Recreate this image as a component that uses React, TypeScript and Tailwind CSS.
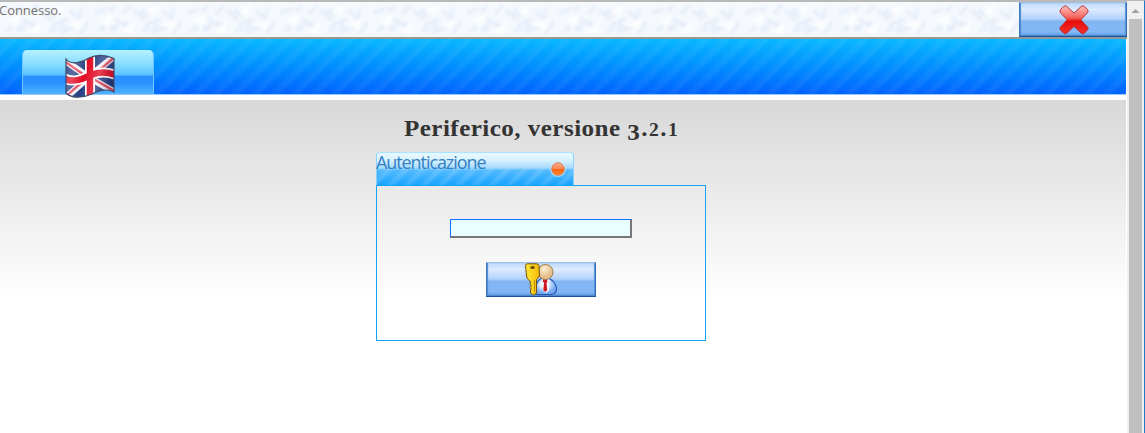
import React from "react";

function CrossIcon() {
  return (
    <svg width="32" height="32" viewBox="0 0 32 32" className="block">
      <defs>
        <linearGradient id="cross" x1="0" y1="0" x2="0" y2="1">
          <stop offset="0" stopColor="#ffc0ba" />
          <stop offset=".42" stopColor="#f4625d" />
          <stop offset=".55" stopColor="#e80d0b" />
          <stop offset="1" stopColor="#f0312c" />
        </linearGradient>
      </defs>
      <path
        d="M2.500 5.500 5.500 2.500Q7 1.200 8.800 2.500L16 9 23.200 2.500Q25 1.200 26.500 2.500L29.500 5.500Q30.800 7 29.500 8.700L22.800 15.800 29.500 23Q31 24.500 29.500 26L26.300 29.200Q25 30.500 23.300 29.200L16 22.500 8.700 29.200Q7.200 30.500 5.700 29.200L2.500 26Q1.200 24.500 2.500 23L9.200 15.800 2.500 8.800Q1.200 7 2.500 5.500Z"
        fill="url(#cross)"
        stroke="#bb3036"
        strokeWidth="1"
      />
    </svg>
  );
}

function UnionFlag() {
  const outline = "M2 5C7 12 19 8 25 4C33 0 42 1 50 4.500V38C43 34 34 37 28 40C19 44 8 45 2 39Z";
  return (
    <svg width="52" height="46" viewBox="0 0 52 46" className="block">
      <defs>
        <clipPath id="flagShape"><path d={outline} /></clipPath>
        <linearGradient id="shine" x1="0" y1="0" x2="1" y2=".25">
          <stop offset="0" stopColor="#fff" stopOpacity=".05" />
          <stop offset=".25" stopColor="#fff" stopOpacity=".25" />
          <stop offset=".48" stopColor="#fff" stopOpacity="0" />
          <stop offset=".75" stopColor="#fff" stopOpacity=".22" />
          <stop offset="1" stopColor="#001" stopOpacity=".15" />
        </linearGradient>
      </defs>
      <g clipPath="url(#flagShape)" fill="none">
        <path d="M0 0H52V46H0Z" fill="#263f82" />
        <path d="M0 6 26 24 52 39M0 45 26 22 52 1" stroke="#f4f0f8" strokeWidth="6.500" />
        <path d="M0 7 26 25M26 23 52 38M0 44 26 21M26 24 52 2" stroke="#e4475a" strokeWidth="2.400" />
        <path d="M26 0V46M0 24C9 30 20 24 27 21C36 17 44 18 52 21" stroke="#fff" strokeWidth="10" />
        <path d="M26 0V46M0 24C9 30 20 24 27 21C36 17 44 18 52 21" stroke="#e30b24" strokeWidth="6.500" />
        <path d="M0 0H52V46H0Z" fill="url(#shine)" />
      </g>
      <path d={outline} fill="none" stroke="#404c68" strokeWidth="1.200" />
    </svg>
  );
}

function KeyUserIcon() {
  return (
    <svg width="34" height="34" viewBox="0 0 34 34" className="block">
      <defs>
        <radialGradient id="head" cx=".4" cy=".3">
          <stop offset="0" stopColor="#fff0d4" />
          <stop offset="1" stopColor="#e6c08c" />
        </radialGradient>
        <linearGradient id="key">
          <stop offset="0" stopColor="#ffe735" />
          <stop offset="1" stopColor="#f4bb08" />
        </linearGradient>
        <radialGradient id="body" cx=".45" cy=".4">
          <stop offset=".3" stopColor="#f5faff" />
          <stop offset="1" stopColor="#75a9f4" />
        </radialGradient>
      </defs>
      <path d="M13 20Q15 15 21 15Q29 15 32 23Q34 31 27 31.500H14Q10 31 11 26Z" fill="url(#body)" stroke="#2457b5" strokeWidth="1.200" />
      <path d="m17 16 4 2 4-2 1 2-2 2 1 7-3 3-3-3 1-7-2-2Z" fill="#fff" />
      <path d="M19 16.500h4l.5 2-1 1.500 .8 7-2 2-2-2 .8-7-1.200-1.500Z" fill="#cb1927" />
      <circle cx="21.500" cy="9" r="7.500" fill="url(#head)" stroke="#98713d" strokeWidth=".9" />
      <path d="M1.500 2.500Q1.500 .800 3.500 .800H12.500Q14.500 .800 15 2.500L15.500 12Q15 15 12.500 16.500V30L9.500 32 6.500 30V27L7.300 26 6 24.500 7.300 23 6 21 6.500 18.500Q2.500 16 2.500 13Z" fill="url(#key)" stroke="#76540f" strokeWidth="1" />
      <path d="M10.500 17V29" stroke="#b97a00" strokeWidth=".8" />
      <ellipse cx="8.500" cy="4.500" rx="2.300" ry="1.500" fill="#6b4810" />
    </svg>
  );
}

function IceTexture() {
  return (
    <svg width="100%" height="35" className="absolute inset-0">
      <defs>
        <filter id="soften" x="0" y="0" width="100%" height="100%"><feGaussianBlur stdDeviation="1.2" /></filter>
        <pattern id="ice" width="93" height="36" patternUnits="userSpaceOnUse">
          <path d="M0 0H93V36H0Z" fill="#f5f8fd" />
          <g filter="url(#soften)">
            <path d="m2 30 9-8 2 7Zm12-23 10-5-5 10Zm14 22 4-11 7 6Zm16-17 7-7 6 11Zm14 17 4-11 8 10Zm18-18 7-7-2 13Zm-58 11 8 6-10 2Zm37-3 3 10-11 2Z" fill="#e5edf9" opacity=".75" />
            <path d="m1 11 12-4M18 29l9-9M41 8l11 10M60 31l15-6M70 9l10 9M30 12l8-9M80 32l9-12M22 17l14 8M55 22l13-5" stroke="#e3ebf8" strokeWidth="4" opacity=".6" />
            <path d="m7 19 14-8-4 13Zm20 9 15-9-4 14Zm27-20 12-6-4 12Zm15 15 15-7-4 12Z" fill="#fff" opacity=".7" />
          </g>
        </pattern>
      </defs>
      <rect width="100%" height="35" fill="url(#ice)" />
    </svg>
  );
}

const buttonClass = "flex items-center justify-center border border-t-[#9fbfdf] border-r-[#2f6fb8] border-b-[#15549d] border-l-[#397bc5] bg-[linear-gradient(180deg,#bddafc_0%,#dceaff_20%,#b3d2fc_48%,#83b5f3_56%,#83b7f5_88%,#5b99e2_100%)] shadow-[inset_1px_-1px_1px_#4d88cd,inset_-1px_0_1px_#568fd5]";

export default function App() {
  return (
    <div className="flex h-[433px] w-full overflow-hidden bg-white">
      <div className="flex min-w-0 flex-1 flex-col">
        <header className="relative flex h-[39px] shrink-0 border-t-2 border-b-2 border-t-[#b9b9b9] border-b-[#979797]">
          <IceTexture />
          <div className="relative flex-1">
            <span className="-ml-px block font-['Open_Sans',sans-serif] text-[13px] leading-[17px] tracking-[-0.05px] text-[#77736f]">Connesso.</span>
          </div>
          <button aria-label="Chiudi" className={`relative h-[35px] w-[108px] pl-[2px] ${buttonClass}`}><CrossIcon /></button>
        </header>
        <nav className="mr-px h-14 shrink-0 border-b border-[#93c8ff] bg-[repeating-linear-gradient(135deg,#ffffff00_0px,#ffffff00_4px,#ffffff0c_8px,#ffffff0f_11px,#ffffff00_14px),linear-gradient(180deg,#09b8ff_0%,#0090ff_48%,#0062ff_100%)] pt-[11px] pl-[22px]">
          <button aria-label="English" className="flex h-[44px] w-[132px] justify-center rounded-t-[5px] border border-b-0 border-[#70c4ff] border-t-[#b2efff] bg-[linear-gradient(180deg,#b3f0ff_0%,#79d7ff_38%,#58c1ff_56%,#2b8eff_58%,#2b92ff_75%,#52b5ff_100%)] pt-[3px] pl-[3px]">
            <UnionFlag />
          </button>
        </nav>
        <main className="mt-[5px] mr-px flex-1 bg-[linear-gradient(180deg,#d8d8d8_0px,#fff_200px)]">
          <h1 className="ml-[404px] w-[280px] origin-left scale-x-[1.09] pt-[15px] font-['Liberation_Serif',serif] text-[23px] leading-[27px] font-bold tracking-[0.42px] whitespace-nowrap text-[#333]">
            Periferico, versione <span className="tracking-[1.3px]"><span className="relative top-[4px]">3</span>.<span className="text-[18px]">2</span>.<span className="text-[18px]">1</span></span>
          </h1>
          <section className="mt-[10px] ml-[376px] w-[330px]">
            <div className="-mt-[2px] flex h-[33px] w-[198px] justify-between rounded-t-[4px] border border-b-0 border-t-[#a9e3ff] border-r-[#8bd3ff] border-l-[#8bd3ff] bg-[linear-gradient(180deg,#e8f9ff_0%,#d8f2ff_22%,#a8dbff_46%,#54bbff00_54%),repeating-linear-gradient(135deg,#ffffff00_0px,#ffffff00_4px,#ffffff20_7px,#ffffff20_9px,#ffffff00_12px),linear-gradient(180deg,#54bbff_53%,#18a3ff_100%)]">
              <h2 className="-ml-px font-['Open_Sans',sans-serif] text-[18px] leading-[19px] tracking-[-1.08px] whitespace-nowrap text-[#327fc2]">Autenticazione</h2>
              <svg width="24" height="32" viewBox="0 0 24 32">
                <defs><linearGradient id="orb" x1="0" y1="0" x2="0" y2="1"><stop stopColor="#ffb08a" /><stop offset=".48" stopColor="#f88255" /><stop offset=".55" stopColor="#ff650e" /><stop offset="1" stopColor="#ff8c32" /></linearGradient></defs>
                <circle cx="9" cy="16" r="8" fill="#d7eaf2" opacity=".65" />
                <circle cx="9" cy="16" r="6.300" fill="url(#orb)" stroke="#c8784f" strokeWidth=".8" />
              </svg>
            </div>
            <div className="flex h-[156px] flex-col items-center border border-[#12a4f5] pt-[33px]">
              <input aria-label="Password" type="password" className="h-[19px] w-[182px] border border-r-2 border-b-2 border-t-[#1673ff] border-r-[#777] border-b-[#777] border-l-[#1673ff] bg-[#e9ffff] outline-none" />
              <button aria-label="Accedi" className={`mt-6 h-[35px] w-[110px] ${buttonClass}`}><KeyUserIcon /></button>
            </div>
          </section>
        </main>
      </div>
      <aside className="flex w-[18px] shrink-0 flex-col border-t border-r border-t-[#b9b9b9] border-r-[#207ac6] bg-[#f0f0f0] pl-[2px]">
        <svg width="13" height="18" viewBox="0 0 13 18"><path d="m2.500 12 4-4 4 4Z" fill="#a0a0a0" /></svg>
        <div className="w-[13px] flex-1 bg-[#c0c0c0]" />
      </aside>
    </div>
  );
}
